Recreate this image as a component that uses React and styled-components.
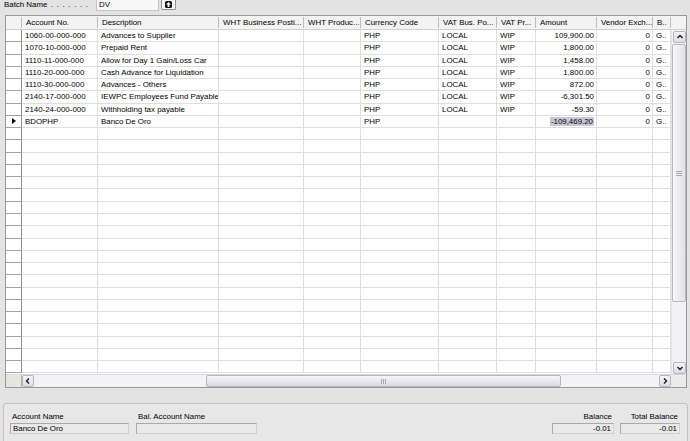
import styled, { createGlobalStyle } from "styled-components";

const GlobalStyle = createGlobalStyle`
  html, body {
    margin: 0;
    padding: 0;
    background: #e3e3e3;
  }
  body {
    font-family: "Liberation Sans", Arial, sans-serif;
    font-size: 7.9px;
    color: #000;
  }
`;

const COLS = [
  { key: "acc", title: "Account No.", width: 76 },
  { key: "desc", title: "Description", width: 121 },
  { key: "whtb", title: "WHT Business Posti...", width: 85 },
  { key: "whtp", title: "WHT Produc...", width: 57 },
  { key: "cur", title: "Currency Code", width: 78 },
  { key: "vatb", title: "VAT Bus. Po...", width: 58 },
  { key: "vatp", title: "VAT Pr...", width: 39 },
  { key: "amt", title: "Amount", width: 61, right: true },
  { key: "vex", title: "Vendor Exch...", width: 56, right: true },
  { key: "b", title: "B..", width: 18 },
];

const TEMPLATE = "16px " + COLS.map((c) => c.width + "px").join(" ");

const LINES = [
  ["1060-00-000-000", "Advances to Supplier", "109,900.00"],
  ["1070-10-000-000", "Prepaid Rent", "1,800.00"],
  ["1110-11-000-000", "Allow for Day 1 Gain/Loss Car", "1,458.00"],
  ["1110-20-000-000", "Cash Advance for Liquidation", "1,800.00"],
  ["1110-30-000-000", "Advances - Others", "872.00"],
  ["2140-17-000-000", "IEWPC Employees Fund Payable", "-6,301.50"],
  ["2140-24-000-000", "Withholding tax payable", "-59.30"],
].map(([acc, desc, amt]) => ({
  acc, desc, amt, cur: "PHP", vatb: "LOCAL", vatp: "WIP", vex: "0", b: "G..",
}));

LINES.push({
  acc: "BDOPHP", desc: "Banco De Oro", cur: "PHP", amt: "-109,469.20",
  vex: "0", b: "G..", current: true,
});

while (LINES.length < 28) LINES.push({});

const Page = styled.div`
  width: 690px;
  height: 441px;
  overflow: hidden;
  background: #e3e3e3;
`;

const TopBar = styled.div`
  height: 15px;
  display: flex;
  align-items: flex-start;
  padding-left: 4px;
`;

const BatchLabel = styled.span`
  width: 92px;
  line-height: 10px;
  white-space: pre;
`;

const Dots = styled.span`
  word-spacing: 1.4px;
`;

const BatchInput = styled.div`
  width: 59px;
  height: 10px;
  line-height: 10px;
  padding-left: 2px;
  background: #f7f7f7;
  border: 1px solid #c4c4c4;
  border-top: none;
`;

const LookupButton = styled.div`
  width: 13px;
  height: 9px;
  margin-left: 2px;
  display: flex;
  align-items: center;
  justify-content: center;
  background: #f4f4f4;
  border: 1px solid #8e8e8e;
  border-top: none;
  border-radius: 0 0 2px 2px;
`;

const Frame = styled.div`
  margin-left: 5px;
  width: 680px;
  border: 1px solid #9a9a9a;
  background: #fff;
`;

const HeaderRow = styled.div`
  display: grid;
  grid-template-columns: ${TEMPLATE} 15px;
  height: 14px;
  background: #f3f3f3;
  border-bottom: 1px solid #cfcfcf;
  box-sizing: border-box;
`;

const HeadCell = styled.div`
  padding-left: 4px;
  white-space: nowrap;
  overflow: hidden;
  border-right: 1px solid #bdbdbd;
  margin: 1px 0;
  line-height: 11px;
`;

const HeadFiller = styled.div``;

const Middle = styled.div`
  display: flex;
  height: 344px;
`;

const Body = styled.div`
  width: 665px;
  display: grid;
  grid-template-columns: ${TEMPLATE};
  grid-auto-rows: 12.28px;
  overflow: hidden;
`;

const Cell = styled.div`
  border-right: 1px solid #dedede;
  border-bottom: 1px solid #dedede;
  padding: 0 ${(p) => (p.$right ? "2px" : "0")} 0 ${(p) => (p.$right ? "0" : "3px")};
  text-align: ${(p) => (p.$right ? "right" : "left")};
  line-height: 11.5px;
  white-space: nowrap;
  overflow: hidden;
`;

const Selector = styled.div`
  border-right: 1px solid #8c8c8c;
  border-bottom: 1px solid #a4a4a4;
  display: flex;
  align-items: center;
  justify-content: center;
  background: #fff;
`;

const Marked = styled.span`
  background: #c6c8d6;
  padding: 0 1px;
`;

const VScroll = styled.div`
  width: 15px;
  display: flex;
  flex-direction: column;
  background: #f2f2f4;
  border-left: 1px solid #e4e4e8;
  box-sizing: border-box;
`;

const ArrowBtn = styled.div`
  width: ${(p) => (p.$w ? p.$w + "px" : "auto")};
  height: ${(p) => (p.$h ? p.$h + "px" : "auto")};
  margin: ${(p) => p.$m || "0"};
  display: flex;
  align-items: center;
  justify-content: center;
  background: linear-gradient(#f6f6f8, #dcdce4);
  border: 1px solid #b6b6c4;
  border-radius: 2px;
  box-sizing: border-box;
  flex-shrink: 0;
`;

const VTrack = styled.div`
  flex: 1;
  display: flex;
  flex-direction: column;
`;

const VThumb = styled.div`
  height: 258px;
  margin: 1px 0 0 0;
  display: flex;
  align-items: center;
  justify-content: center;
  background: linear-gradient(90deg, #f7f7f9, #e2e2e8);
  border: 1px solid #b8b8c6;
  border-radius: 2px;
  box-sizing: border-box;
`;

const VGrip = styled.div`
  width: 6px;
  height: 5px;
  background: repeating-linear-gradient(#a6a6b4 0 1px, transparent 1px 2px);
`;

const HGrip = styled.div`
  width: 5px;
  height: 5px;
  background: repeating-linear-gradient(90deg, #a6a6b4 0 1px, transparent 1px 2px);
`;

const BottomBar = styled.div`
  display: flex;
  height: 12px;
  border-top: 1px solid #d8d8d8;
  background: #f3f3f5;
`;

const HScroll = styled.div`
  width: 665px;
  display: flex;
`;

const SelCorner = styled.div`
  width: 16px;
  background: #e6e6de;
  border-right: 1px solid #b0b0b0;
  box-sizing: border-box;
`;

const HTrack = styled.div`
  flex: 1;
  display: flex;
`;

const HThumb = styled.div`
  width: 355px;
  margin-left: 172px;
  display: flex;
  align-items: center;
  justify-content: center;
  background: linear-gradient(#f7f7f9, #d9d9e1);
  border: 1px solid #b4b4c2;
  border-radius: 2px;
  box-sizing: border-box;
`;

const Corner = styled.div`
  width: 15px;
  background: #ececec;
`;

const Panel = styled.div`
  margin: 15px 2px 0 3px;
  height: 60px;
  border: 1px solid #c2c2c2;
  border-radius: 3px;
  background: #e7e7e7;
  display: flex;
  justify-content: space-between;
  padding: 7px 7px 0 6px;
`;

const FieldRow = styled.div`
  display: flex;
  gap: ${(p) => p.$gap}px;
`;

const Field = styled.div`
  display: flex;
  flex-direction: column;
  width: ${(p) => p.$w}px;
  align-items: ${(p) => (p.$right ? "flex-end" : "stretch")};
`;

const FieldLabel = styled.div`
  height: 12px;
  line-height: 12px;
  padding: 0 ${(p) => (p.$right ? "2px" : "0")} 0 ${(p) => (p.$right ? "0" : "2px")};
`;

const FieldBox = styled.div`
  align-self: stretch;
  height: 11px;
  line-height: 10px;
  padding: 0 2px;
  text-align: ${(p) => (p.$right ? "right" : "left")};
  background: #e9e9e9;
  border: 1px solid #a9a9a9;
  border-right-color: #d0d0d0;
  border-bottom-color: #d0d0d0;
  box-sizing: border-box;
`;

const Chevron = ({ dir }) => {
  const d = {
    up: "M1.5 5 L4 2.5 L6.5 5",
    down: "M1.5 3 L4 5.5 L6.5 3",
    left: "M5 1.5 L2.5 4 L5 6.5",
    right: "M3 1.5 L5.5 4 L3 6.5",
  }[dir];
  return (
    <svg width="8" height="8" viewBox="0 0 8 8">
      <path d={d} fill="none" stroke="#1a1a2a" strokeWidth="1.4" />
    </svg>
  );
};

export default function App() {
  return (
    <Page>
      <GlobalStyle />
      <TopBar>
        <BatchLabel>
          Batch Name<Dots> . . . . . . .</Dots>
        </BatchLabel>
        <BatchInput>DV</BatchInput>
        <LookupButton>
          <svg width="7" height="7" viewBox="0 0 7 7">
            <rect x="0" y="0" width="7" height="7" rx="1.5" fill="#111" />
            <path d="M3.5 1 L6 3.6 L4.4 3.6 L4.4 6 L2.6 6 L2.6 3.6 L1 3.6 Z" fill="#fff" />
          </svg>
        </LookupButton>
      </TopBar>
      <Frame>
        <HeaderRow>
          <HeadCell />
          {COLS.map((c) => (
            <HeadCell key={c.key}>{c.title}</HeadCell>
          ))}
          <HeadFiller />
        </HeaderRow>
        <Middle>
          <Body>
            {LINES.map((row, i) => [
              <Selector key={"s" + i}>
                {row.current && (
                  <svg width="4" height="6" viewBox="0 0 4 6">
                    <path d="M0 0 L4 3 L0 6 Z" fill="#000" />
                  </svg>
                )}
              </Selector>,
              ...COLS.map((c) => (
                <Cell key={i + c.key} $right={c.right}>
                  {row.current && c.key === "amt" ? <Marked>{row.amt}</Marked> : row[c.key]}
                </Cell>
              )),
            ])}
          </Body>
          <VScroll>
            <ArrowBtn $h={12} $m="1px 0 0 1px">
              <Chevron dir="up" />
            </ArrowBtn>
            <VTrack>
              <VThumb>
                <VGrip />
              </VThumb>
            </VTrack>
            <ArrowBtn $h={12} $m="0 0 0 1px">
              <Chevron dir="down" />
            </ArrowBtn>
          </VScroll>
        </Middle>
        <BottomBar>
          <HScroll>
            <SelCorner />
            <ArrowBtn $w={12}>
              <Chevron dir="left" />
            </ArrowBtn>
            <HTrack>
              <HThumb>
                <HGrip />
              </HThumb>
            </HTrack>
            <ArrowBtn $w={12}>
              <Chevron dir="right" />
            </ArrowBtn>
          </HScroll>
          <Corner />
        </BottomBar>
      </Frame>
      <Panel>
        <FieldRow $gap={7}>
          <Field $w={119}>
            <FieldLabel>Account Name</FieldLabel>
            <FieldBox>Banco De Oro</FieldBox>
          </Field>
          <Field $w={121}>
            <FieldLabel>Bal. Account Name</FieldLabel>
            <FieldBox />
          </Field>
        </FieldRow>
        <FieldRow $gap={6}>
          <Field $w={62} $right>
            <FieldLabel $right>Balance</FieldLabel>
            <FieldBox $right>-0.01</FieldBox>
          </Field>
          <Field $w={60} $right>
            <FieldLabel $right>Total Balance</FieldLabel>
            <FieldBox $right>-0.01</FieldBox>
          </Field>
        </FieldRow>
      </Panel>
    </Page>
  );
}
